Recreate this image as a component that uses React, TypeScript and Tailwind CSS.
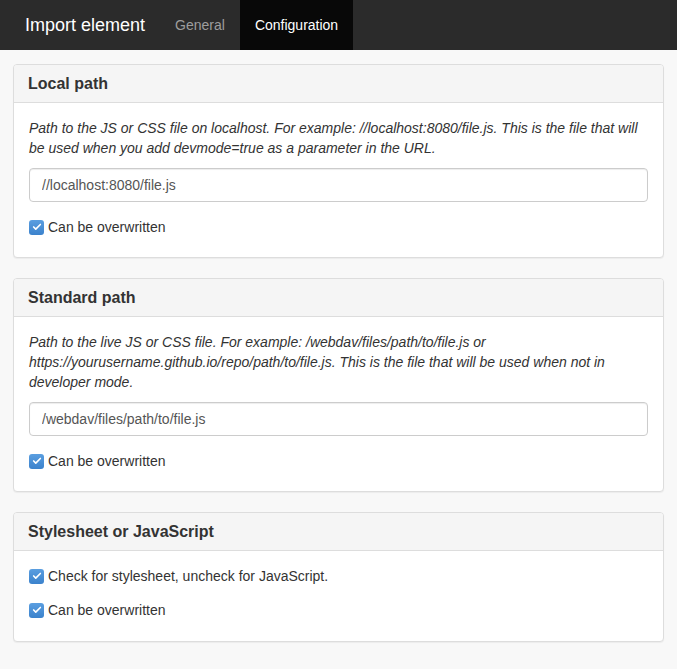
import { Check } from "lucide-react";

function Checkbox({ label }: { label: string }) {
  return (
    <label className="flex h-5 items-center gap-[4px] text-[14px] text-[#333]">
      <span className="flex h-[15px] w-[15px] items-center justify-center rounded-[3px] bg-gradient-to-b from-[#5a9ee0] to-[#3b82cc]">
        <Check className="h-[10px] w-[10px] text-white" strokeWidth={4} />
      </span>
      {label}
    </label>
  );
}

function Panel({
  title,
  children,
}: {
  title: string;
  children: React.ReactNode;
}) {
  return (
    <div className="overflow-hidden rounded-[4px] border border-[#ddd] bg-white shadow-[0_1px_1px_rgba(0,0,0,0.05)]">
      <div className="flex h-[38px] items-center border-b border-[#ddd] bg-[#f5f5f5] px-[14px] text-[16px] font-bold text-[#333]">
        {title}
      </div>
      <div className="px-[15px] pb-[20px] pt-[15px]">{children}</div>
    </div>
  );
}

function Field({ value }: { value: string }) {
  return (
    <input
      readOnly
      value={value}
      className="mt-[10px] h-[34px] w-full rounded-[4px] border border-[#ccc] px-[12px] text-[14px] text-[#555] shadow-[inset_0_1px_1px_rgba(0,0,0,0.075)] outline-none"
    />
  );
}

export default function App() {
  return (
    <div className="min-h-[669px] bg-[#f8f8f8] font-['Liberation_Sans',Arial,sans-serif]">
      <nav className="flex h-[50px] items-stretch bg-[#2b2b2b]">
        <span className="flex items-center pl-[25px] pr-[15px] text-[18px] text-white">
          Import element
        </span>
        <span className="flex items-center px-[15px] text-[14px] text-[#9d9d9d]">
          General
        </span>
        <span className="flex items-center bg-[#080808] px-[15px] text-[14px] text-white">
          Configuration
        </span>
      </nav>

      <div className="flex flex-col gap-[20px] px-[13px] pt-[14px]">
        <Panel title="Local path">
          <p className="text-[14px] italic leading-[20px] text-[#333]">
            Path to the JS or CSS file on localhost. For example:
            //localhost:8080/file.js. This is the file that will be used when
            you add devmode=true as a parameter in the URL.
          </p>
          <Field value="//localhost:8080/file.js" />
          <div className="mt-[15px]">
            <Checkbox label="Can be overwritten" />
          </div>
        </Panel>

        <Panel title="Standard path">
          <p className="text-[14px] italic leading-[20px] text-[#333]">
            Path to the live JS or CSS file. For example:
            /webdav/files/path/to/file.js or
            https://yourusername.github.io/repo/path/to/file.js. This is the
            file that will be used when not in developer mode.
          </p>
          <Field value="/webdav/files/path/to/file.js" />
          <div className="mt-[15px]">
            <Checkbox label="Can be overwritten" />
          </div>
        </Panel>

        <Panel title="Stylesheet or JavaScript">
          <div className="flex flex-col gap-[14px] pb-[1px]">
            <Checkbox label="Check for stylesheet, uncheck for JavaScript." />
            <Checkbox label="Can be overwritten" />
          </div>
        </Panel>
      </div>
    </div>
  );
}
